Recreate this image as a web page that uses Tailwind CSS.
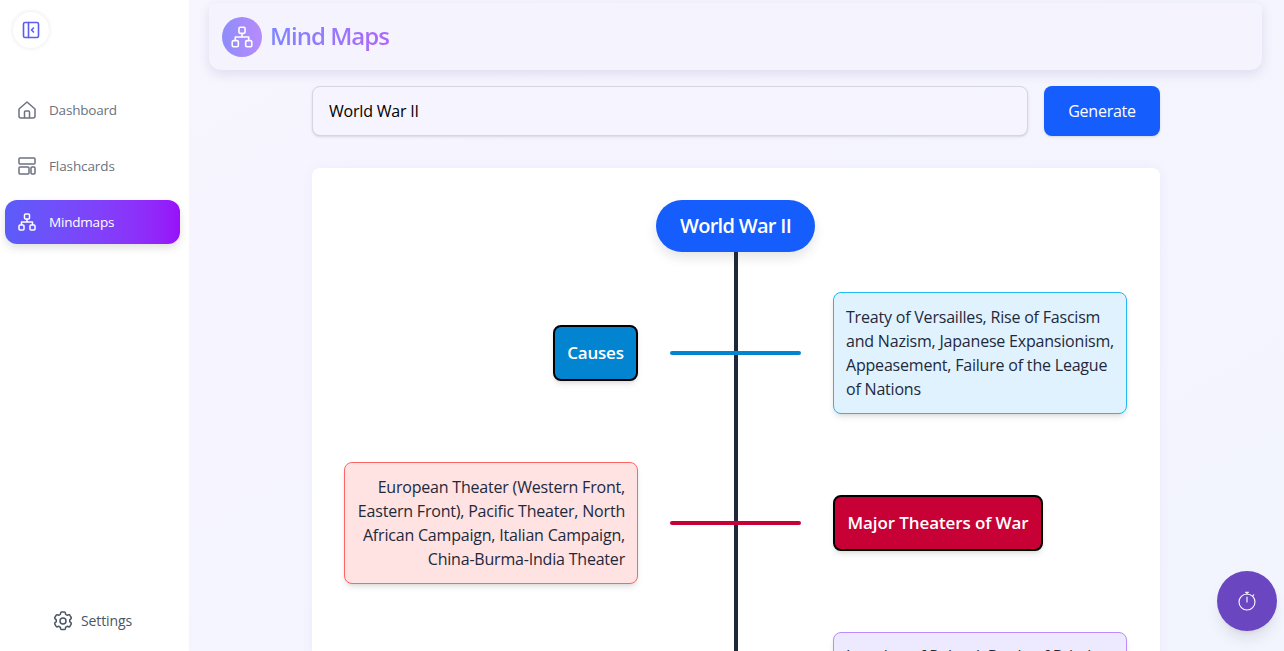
<!DOCTYPE html>
<html lang="en">
<head>
    <meta charset="UTF-8">
    <meta name="viewport" content="width=device-width, initial-scale=1.0">
    <title>Mind Maps</title>
    <script src="https://cdn.jsdelivr.net/npm/@tailwindcss/browser@4"></script>
</head>
<body class="h-screen overflow-hidden flex bg-[#f5f4fe] font-['Open_Sans',sans-serif]">
    <!-- sidebar -->
    <aside class="w-[189px] h-full shrink-0 bg-white flex flex-col shadow-[0_0_6px_rgba(90,70,200,0.06)]">
        <div class="pl-[13px] pt-[12px]">
            <button class="w-9 h-9 rounded-full bg-white shadow-[0_0_5px_rgba(0,0,0,0.1)] flex items-center justify-center text-[#5b5cf6]">
                <svg class="w-[18px] h-[18px]" viewBox="0 0 18 18" fill="none" stroke="currentColor" stroke-width="1.6" stroke-linecap="round" stroke-linejoin="round"><rect x="1.500" y="1.500" width="15" height="15" rx="1.500"/><path d="M6.500 1.500v15M11.500 7l-2 2 2 2"/></svg>
            </button>
        </div>
        <nav class="mt-10 pl-[5px] pr-[9px] flex flex-col gap-3">
            <a class="h-11 flex items-center gap-[13px] pl-[13px] text-[13.5px] tracking-[-0.2px] text-[#6b7280]">
                <svg class="w-[18px] h-[18px] text-[#6b7280]" viewBox="0 0 18 18" fill="none" stroke="currentColor" stroke-width="1.500" stroke-linejoin="round"><path d="M1 8 9 1l8 7v7a2 2 0 0 1-2 2H3a2 2 0 0 1-2-2z"/><path d="M6.500 17v-6a1 1 0 0 1 1-1h3a1 1 0 0 1 1 1v6"/></svg>
                Dashboard
            </a>
            <a class="h-11 flex items-center gap-[13px] pl-[13px] text-[13.5px] tracking-[-0.1px] text-[#6b7280]">
                <svg class="w-[18px] h-[18px] text-[#6b7280]" viewBox="0 0 18 18" fill="none" stroke="currentColor" stroke-width="1.500"><rect x="1" y="1" width="16" height="6" rx="1"/><rect x="1" y="10" width="10" height="7" rx="1"/><rect x="13" y="10" width="4" height="7" rx="1"/></svg>
                Flashcards
            </a>
            <a class="h-11 flex items-center gap-[13px] pl-[13px] text-[13.5px] tracking-[-0.2px] text-white rounded-xl bg-gradient-to-r from-[#5b5cf9] to-[#9810fa] shadow-[0_4px_8px_rgba(0,0,0,0.12)]">
                <svg class="w-[18px] h-[18px]" viewBox="0 0 18 18" fill="none" stroke="currentColor" stroke-width="1.500" stroke-linejoin="round"><rect x="6.500" y="1" width="5" height="5" rx="1"/><rect x="1" y="12" width="5" height="5" rx="1"/><rect x="12" y="12" width="5" height="5" rx="1"/><path d="M9 6v3M3.500 12V9h11v3"/></svg>
                Mindmaps
            </a>
        </nav>
        <a class="mt-auto mb-[18px] pr-[6px] flex items-center justify-center gap-[6px] text-sm tracking-[-0.1px] text-[#4b5563]">
            <svg class="w-6 h-6 text-[#4b5563]" viewBox="0 0 24 24" fill="none" stroke="currentColor" stroke-width="1.500" stroke-linecap="round" stroke-linejoin="round"><path d="M9.600 3.900c.1-.5.6-.9 1.100-.9h2.600c.5 0 1 .4 1.100.9l.2 1.500c.6.3 1.100.6 1.600.9l1.400-.5c.5-.2 1.100 0 1.300.5l1.300 2.200c.3.500.1 1.100-.3 1.400l-1.200 1c.1.600.1 1.200 0 1.800l1.200 1c.4.300.6.900.3 1.400l-1.300 2.200c-.3.500-.8.700-1.300.5l-1.400-.5c-.5.400-1 .7-1.600.9l-.2 1.500c-.1.500-.6.900-1.100.9h-2.600c-.5 0-1-.4-1.100-.9l-.2-1.500c-.6-.2-1.100-.5-1.600-.9l-1.400.5c-.5.2-1.100 0-1.300-.5l-1.300-2.200c-.3-.5-.1-1.100.3-1.400l1.200-1c-.1-.6-.1-1.200 0-1.800l-1.200-1c-.4-.3-.6-.9-.3-1.400l1.300-2.200c.3-.5.8-.7 1.300-.5l1.400.5c.5-.3 1-.6 1.600-.9z"/><circle cx="12" cy="12" r="3"/></svg>
            Settings
        </a>
    </aside>

    <main class="flex-1 min-w-0 h-full pl-5 pr-[22px] bg-gradient-to-br from-[#f7f5fe] to-[#f2f4fe]">
        <!-- header -->
        <header class="mt-[3px] h-[67px] rounded-b-xl rounded-t-md bg-[#f5f3fe] shadow-[0_4px_12px_rgba(60,50,120,0.12)] flex items-center gap-2 px-[13px]">
            <div class="w-10 h-10 rounded-full bg-gradient-to-r from-[#8e8cfb] to-[#b78bfc] flex items-center justify-center text-white">
                <svg class="w-[22px] h-[22px]" viewBox="0 0 18 18" fill="none" stroke="currentColor" stroke-width="1.300" stroke-linejoin="round"><rect x="6.500" y="1" width="5" height="5" rx="1"/><rect x="1" y="12" width="5" height="5" rx="1"/><rect x="12" y="12" width="5" height="5" rx="1"/><path d="M9 6v3M3.500 12V9h11v3"/></svg>
            </div>
            <h1 class="text-[24px] font-semibold tracking-[-1px] -translate-y-px text-transparent bg-clip-text bg-gradient-to-r from-[#7c86ff] to-[#ad66fb]">Mind Maps</h1>
        </header>

        <div class="w-[848px] ml-[103px]">
            <!-- topic form -->
            <form class="mt-4 flex gap-4">
                <input type="text" value="World War II" class="w-[716px] h-[50px] px-4 rounded-lg bg-[#f6f4fe] border border-[#d5d5e3] shadow-sm text-base tracking-[-0.2px] text-black outline-none">
                <button type="button" class="flex-1 h-[50px] rounded-lg bg-[#155dfc] text-white text-base tracking-[-0.25px] shadow-sm">Generate</button>
            </form>

            <!-- mind map card -->
            <section class="mt-8 bg-white rounded-lg pt-8 pb-8 pl-8 pr-[33px] shadow-[0_0_12px_rgba(90,70,200,0.05)]">
                <div class="flex justify-center">
                    <div class="h-[52px] w-[159px] rounded-full bg-[#155dfc] text-white text-xl font-semibold tracking-[-0.7px] flex items-center justify-center shadow-[0_6px_12px_rgba(0,0,0,0.1)]">World War II</div>
                </div>
                <div class="relative pt-10 flex flex-col gap-12">
                    <div class="absolute left-[390px] top-0 bottom-[-200px] w-1 bg-[#1e293b]"></div>

                    <div class="relative grid grid-cols-[1fr_131px_1fr] gap-8 items-center">
                        <div class="flex justify-end">
                            <div class="h-14 w-[85px] flex items-center justify-center rounded-lg bg-[#0284d0] border-2 border-black text-white text-[17px] font-semibold tracking-[-0.2px] shadow-md">Causes</div>
                        </div>
                        <div class="h-1 rounded-full bg-[#0284d0]"></div>
                        <div class="rounded-lg bg-[#e0f2fe] border border-[#22b8f5] shadow-md p-3 text-base leading-6 tracking-[-0.2px] text-[#1e293b]">Treaty of Versailles, Rise of Fascism and Nazism, Japanese Expansionism, Appeasement, Failure of the League of Nations</div>
                    </div>

                    <div class="relative grid grid-cols-[1fr_131px_1fr] gap-8 items-center">
                        <div class="rounded-lg bg-[#ffe2e2] border border-[#ff6467] shadow-md p-3 text-base leading-6 tracking-[-0.2px] text-[#1e293b] text-right">European Theater (Western Front, Eastern Front), Pacific Theater, North African Campaign, Italian Campaign, China-Burma-India Theater</div>
                        <div class="h-1 rounded-full bg-[#c70036]"></div>
                        <div class="flex justify-start">
                            <div class="h-14 w-[210px] flex items-center justify-center rounded-lg bg-[#c70036] border-2 border-black text-white text-[17px] font-semibold tracking-[-0.1px] whitespace-nowrap shadow-md">Major Theaters of War</div>
                        </div>
                    </div>

                    <div class="relative grid grid-cols-[1fr_131px_1fr] gap-8 items-center">
                        <div></div>
                        <div></div>
                        <div class="rounded-lg bg-[#ede9fe] border border-[#b98cff] shadow-md px-3 pt-[11px] pb-3 text-base leading-6 tracking-[-0.2px] text-[#1e293b]">Invasion of Poland, Battle of Britain, Operation Barbarossa, Pearl Harbor</div>
                    </div>
                </div>
            </section>
        </div>
    </main>

    <!-- timer button -->
    <button class="fixed right-[7px] bottom-[20px] w-[60px] h-[60px] rounded-full bg-[#6b46c1] text-white flex items-center justify-center shadow-lg">
        <svg class="w-5 h-5" viewBox="0 0 20 20" fill="none" stroke="currentColor" stroke-width="1.100" stroke-linecap="round"><circle cx="10" cy="11" r="8"/><path d="M10 3V1.300M8.500 1.300h3M10 11V6M15.800 4.800l1-1"/></svg>
    </button>
</body>
</html>
